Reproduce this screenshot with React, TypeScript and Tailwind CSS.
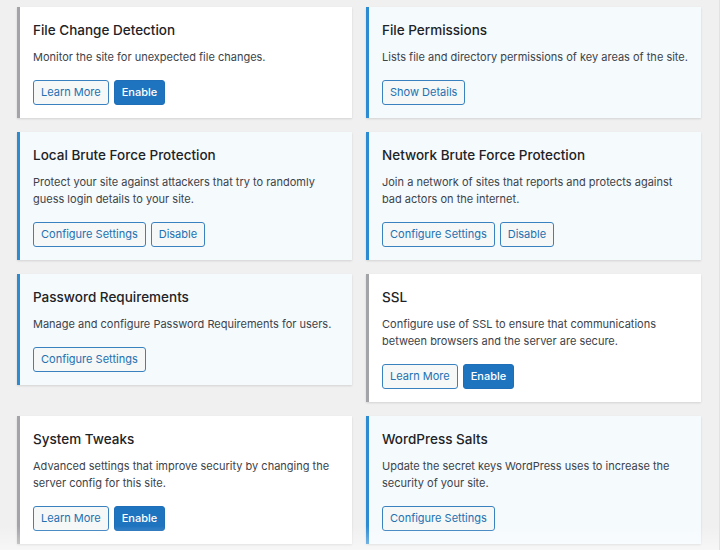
import type { ReactNode } from "react";

// ── Types ──────────────────────────────────────────────────────────────────
type Action = { label: string; primary?: boolean };

type Module = {
  title: string;
  description: string;
  enabled: boolean;
  actions: Action[];
};

const modules: Module[] = [
  {
    title: "File Change Detection",
    description: "Monitor the site for unexpected file changes.",
    enabled: false,
    actions: [{ label: "Learn More" }, { label: "Enable", primary: true }],
  },
  {
    title: "File Permissions",
    description: "Lists file and directory permissions of key areas of the site.",
    enabled: true,
    actions: [{ label: "Show Details" }],
  },
  {
    title: "Local Brute Force Protection",
    description:
      "Protect your site against attackers that try to randomly guess login details to your site.",
    enabled: true,
    actions: [{ label: "Configure Settings" }, { label: "Disable" }],
  },
  {
    title: "Network Brute Force Protection",
    description:
      "Join a network of sites that reports and protects against bad actors on the internet.",
    enabled: true,
    actions: [{ label: "Configure Settings" }, { label: "Disable" }],
  },
  {
    title: "Password Requirements",
    description: "Manage and configure Password Requirements for users.",
    enabled: true,
    actions: [{ label: "Configure Settings" }],
  },
  {
    title: "SSL",
    description:
      "Configure use of SSL to ensure that communications between browsers and the server are secure.",
    enabled: false,
    actions: [{ label: "Learn More" }, { label: "Enable", primary: true }],
  },
  {
    title: "System Tweaks",
    description:
      "Advanced settings that improve security by changing the server config for this site.",
    enabled: false,
    actions: [{ label: "Learn More" }, { label: "Enable", primary: true }],
  },
  {
    title: "WordPress Salts",
    description:
      "Update the secret keys WordPress uses to increase the security of your site.",
    enabled: true,
    actions: [{ label: "Configure Settings" }],
  },
];

// ── Button ─────────────────────────────────────────────────────────────────
function Button({ children, primary }: { children: ReactNode; primary?: boolean }) {
  return (
    <button
      type="button"
      className={
        primary
          ? "h-[25px] px-[7px] rounded-[3px] border border-[#1e6fb8] bg-[#1f74bf] text-white text-[11px] font-medium leading-none"
          : "h-[25px] px-[7px] rounded-[3px] border border-[#3a82bf] bg-[#f6f7f7] text-[#2271b1] text-[11px] leading-none"
      }
    >
      {children}
    </button>
  );
}

// ── Module card ────────────────────────────────────────────────────────────
function ModuleCard({ data }: { data: Module }) {
  return (
    <div
      className={
        data.enabled
          ? "flex flex-col border-l-[3px] border-[#2d8bd2] bg-[#f5fafd] pl-[13px] pr-[12px] pt-[13px] pb-[13px] shadow-[0_1px_2px_rgba(0,0,0,0.12)]"
          : "flex flex-col border-l-[3px] border-[#a2a4a7] bg-white pl-[13px] pr-[12px] pt-[13px] pb-[13px] shadow-[0_1px_2px_rgba(0,0,0,0.12)]"
      }
    >
      <h3 className="text-[13.5px] leading-[20px] font-medium text-[#1d2327]">{data.title}</h3>
      <p className="mt-[9px] text-[11px] leading-[17px] text-[#3c434a]">{data.description}</p>
      <div className="flex gap-[5px] mt-[14px]">
        {data.actions.map((a) => (
          <Button key={a.label} primary={a.primary}>
            {a.label}
          </Button>
        ))}
      </div>
    </div>
  );
}

// ── Main ───────────────────────────────────────────────────────────────────
export default function App() {
  return (
    <div
      className="relative min-h-[550px] bg-[#f0f0f0] pl-[17px] pr-[18px] pt-[7px] pb-[8px] border-r border-[#e2e2e2]"
      style={{ fontFamily: "Inter, 'Noto Sans', sans-serif" }}
    >
      <div className="grid grid-cols-2 gap-x-[14px] gap-y-[14px] items-start">
        {modules.map((m) => (
          <ModuleCard key={m.title} data={m} />
        ))}
      </div>

      {/* soft fade at the bottom edge */}
      <div className="pointer-events-none absolute inset-x-0 bottom-0 h-[26px] bg-gradient-to-t from-white/50 to-transparent" />
    </div>
  );
}
